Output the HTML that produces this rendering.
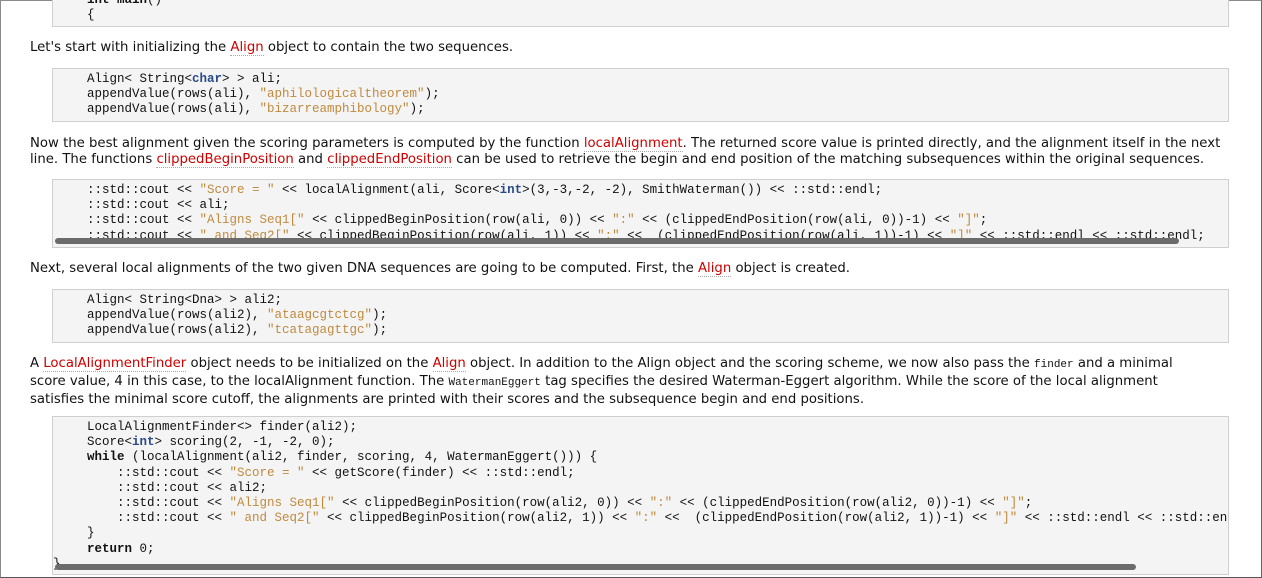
<!DOCTYPE html>
<html><head><meta charset="utf-8"><style>
html,body{margin:0;padding:0;background:#fff;width:1262px;height:578px;overflow:hidden;position:relative}
.frame{position:absolute;left:0;top:0;width:1260px;height:576px;border:1px solid #8a8a8a;border-bottom-color:#555;border-right-color:#666}
.box{position:absolute;left:52px;width:1175px;background:#f4f4f4;border:1px solid #cfcfcf;overflow:hidden}
pre{margin:0;position:absolute;left:34px;font-family:"Liberation Mono",monospace;font-size:12.5px;line-height:15.2px;color:#111;white-space:pre}
.s{color:#c08a3e}.k{color:#2b4b87;font-weight:bold}.b{font-weight:bold}
p{position:absolute;left:30px;width:1212px;margin:0;font-family:"DejaVu Sans",sans-serif;font-size:13.25px;line-height:15.8px;color:#111}
a{color:#c00;text-decoration:none;border-bottom:1px dotted #aaa}
code{font-family:"Liberation Mono",monospace;font-size:11px}
.sb{position:absolute;height:6px;background:#6b6b6b;border-radius:3px}
</style></head><body>
<div class="frame"></div>
<div class="box" style="top:-10px;height:35px"><pre style="top:2px"><span class="b">int main</span>()
{</pre></div>
<p style="top:40px">Let's start with initializing the <a>Align</a> object to contain the two sequences.</p>
<div class="box" style="top:68px;height:52px"><pre style="top:3px">Align&lt; String&lt;<span class="k">char</span>&gt; &gt; ali;
appendValue(rows(ali), <span class="s">"aphilologicaltheorem"</span>);
appendValue(rows(ali), <span class="s">"bizarreamphibology"</span>);</pre></div>
<p style="top:136px">Now the best alignment given the scoring parameters is computed by the function <a>localAlignment</a>. The returned score value is printed directly, and the alignment itself in the next line. The functions <a>clippedBeginPosition</a> and <a>clippedEndPosition</a> can be used to retrieve the begin and end position of the matching subsequences within the original sequences.</p>
<div class="box" style="top:179px;height:67px"><pre style="top:3px">::std::cout &lt;&lt; <span class="s">"Score = "</span> &lt;&lt; localAlignment(ali, Score&lt;<span class="k">int</span>&gt;(3,-3,-2, -2), SmithWaterman()) &lt;&lt; ::std::endl;
::std::cout &lt;&lt; ali;
::std::cout &lt;&lt; <span class="s">"Aligns Seq1["</span> &lt;&lt; clippedBeginPosition(row(ali, 0)) &lt;&lt; <span class="s">":"</span> &lt;&lt; (clippedEndPosition(row(ali, 0))-1) &lt;&lt; <span class="s">"]"</span>;
::std::cout &lt;&lt; <span class="s">" and Seq2["</span> &lt;&lt; clippedBeginPosition(row(ali, 1)) &lt;&lt; <span class="s">":"</span> &lt;&lt;  (clippedEndPosition(row(ali, 1))-1) &lt;&lt; <span class="s">"]"</span> &lt;&lt; ::std::endl &lt;&lt; ::std::endl;</pre>
<div class="sb" style="left:2px;top:58px;width:1124px"></div></div>
<p style="top:261px">Next, several local alignments of the two given DNA sequences are going to be computed. First, the <a>Align</a> object is created.</p>
<div class="box" style="top:289px;height:52px"><pre style="top:3px">Align&lt; String&lt;Dna&gt; &gt; ali2;
appendValue(rows(ali2), <span class="s">"ataagcgtctcg"</span>);
appendValue(rows(ali2), <span class="s">"tcatagagttgc"</span>);</pre></div>
<p style="top:356px">A <a>LocalAlignmentFinder</a> object needs to be initialized on the <a>Align</a> object. In addition to the Align object and the scoring scheme, we now also pass the <code>finder</code> and a minimal<br>score value, 4 in this case, to the localAlignment function. The <code>WatermanEggert</code> tag specifies the desired Waterman-Eggert algorithm. While the score of the local alignment<br>satisfies the minimal score cutoff, the alignments are printed with their scores and the subsequence begin and end positions.</p>
<div class="box" style="top:416px;height:157px"><pre style="top:3px">LocalAlignmentFinder&lt;&gt; finder(ali2);
Score&lt;<span class="k">int</span>&gt; scoring(2, -1, -2, 0);
<span class="b">while</span> (localAlignment(ali2, finder, scoring, 4, WatermanEggert())) {
    ::std::cout &lt;&lt; <span class="s">"Score = "</span> &lt;&lt; getScore(finder) &lt;&lt; ::std::endl;
    ::std::cout &lt;&lt; ali2;
    ::std::cout &lt;&lt; <span class="s">"Aligns Seq1["</span> &lt;&lt; clippedBeginPosition(row(ali2, 0)) &lt;&lt; <span class="s">":"</span> &lt;&lt; (clippedEndPosition(row(ali2, 0))-1) &lt;&lt; <span class="s">"]"</span>;
    ::std::cout &lt;&lt; <span class="s">" and Seq2["</span> &lt;&lt; clippedBeginPosition(row(ali2, 1)) &lt;&lt; <span class="s">":"</span> &lt;&lt;  (clippedEndPosition(row(ali2, 1))-1) &lt;&lt; <span class="s">"]"</span> &lt;&lt; ::std::endl &lt;&lt; ::std::endl;
}
<span class="b">return</span> 0;</pre>
<pre style="top:140px;left:0">}</pre>
<div class="sb" style="left:2px;top:147px;width:1081px"></div></div>
</body></html>
